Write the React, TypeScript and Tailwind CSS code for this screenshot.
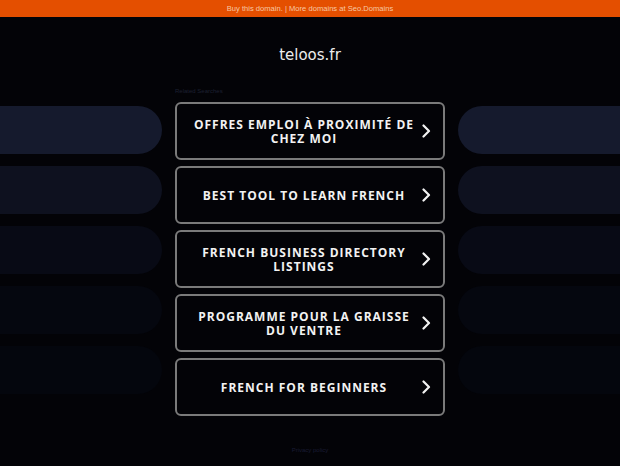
import React from 'react';

const links = [
  'Offres emploi à proximité de chez moi',
  'Best tool to learn French',
  'French business directory listings',
  'Programme pour la graisse du ventre',
  'French for beginners',
];

// side pills fade out toward the bottom
const pillColors = ['bg-[#151a2d]', 'bg-[#0e111f]', 'bg-[#080a15]', 'bg-[#05070f]', 'bg-[#04060d]'];

function Chevron() {
  return (
    <svg width="10" height="14" viewBox="0 0 10 14" fill="none" className="shrink-0">
      <polyline points="2.5,1.5 8,7 2.5,12.5" stroke="#f2f2f2" strokeWidth="2.2" strokeLinecap="round" strokeLinejoin="round" />
    </svg>
  );
}

export default function App() {
  return (
    <div className="w-[620px] h-[466px] overflow-hidden bg-[#030307] font-['DejaVu_Sans',sans-serif]">
      {/* Top banner */}
      <div className="h-[17px] bg-[#e44f00] flex items-center justify-center">
        <p className="font-['Liberation_Sans',Arial,sans-serif] text-[7.6px] text-[#f7c8a4]">
          Buy this domain. | More domains at Seo.Domains
        </p>
      </div>

      {/* Domain title */}
      <h1 className="mt-[28px] h-[20px] leading-[20px] text-center text-[15px] text-[#ececec]">teloos.fr</h1>

      <div className="mt-[19px] flex items-start gap-[13px]">
        {/* left pills */}
        <div className="w-[162px] pt-[22px] flex flex-col gap-[12px]">
          {pillColors.map((c, i) => (
            <div key={i} className={`h-[48px] rounded-r-[24px] ${c}`} />
          ))}
        </div>

        {/* links */}
        <div className="w-[270px] flex flex-col">
          <p className="h-[14px] mb-[4px] leading-[14px] text-[6px] text-[#1d2032] font-['Liberation_Sans',sans-serif]">Related Searches</p>
          <div className="flex flex-col gap-[6px]">
            {links.map((l) => (
              <div
                key={l}
                className="h-[58px] border-2 border-[#7a7a7a] rounded-[6px] flex items-center pl-[14px] pr-[12px]"
              >
                <span className="flex-1 pt-[2px] text-center uppercase font-bold font-['Open_Sans',sans-serif] text-[12px] leading-[14px] tracking-[1px] text-[#f2f2f2]">
                  {l}
                </span>
                <span className="ml-[4px]"><Chevron /></span>
              </div>
            ))}
          </div>
          <p className="mt-[30px] text-center text-[6px] text-[#1a1c34] font-['Liberation_Sans',sans-serif]">Privacy policy</p>
        </div>

        {/* right pills */}
        <div className="w-[162px] pt-[22px] flex flex-col gap-[12px]">
          {pillColors.map((c, i) => (
            <div key={i} className={`h-[48px] rounded-l-[24px] ${c}`} />
          ))}
        </div>
      </div>
    </div>
  );
}
